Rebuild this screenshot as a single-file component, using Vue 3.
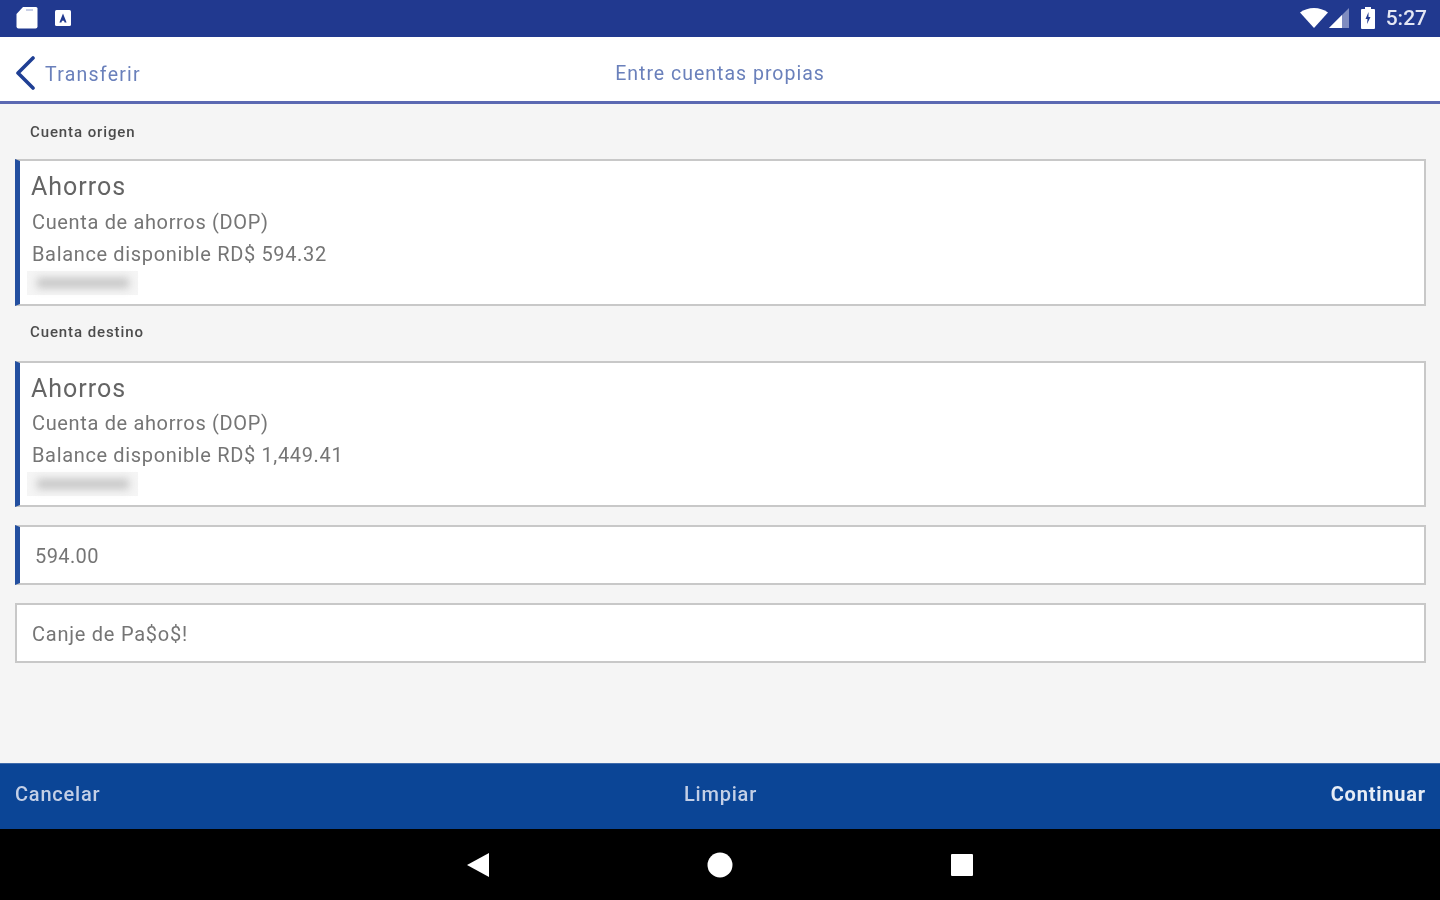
<script setup>
const cards = [
  { label: 'Cuenta origen', balance: 'Balance disponible RD$ 594.32' },
  { label: 'Cuenta destino', balance: 'Balance disponible RD$ 1,449.41' }
]
</script>

<template>
  <div class="screen">
    <div class="status">
      <div class="status-left">
        <svg width="22" height="24" viewBox="0 0 22 24"><path d="M7 1h13a1.500 1.500 0 0 1 1.500 1.500v18a2 2 0 0 1-2 2h-17a2 2 0 0 1-2-2V8z" fill="#fff"/><rect x="10" y="3" width="7" height="2" fill="#c9cfe6"/></svg>
        <svg width="18" height="18" viewBox="0 0 18 18"><rect x="1" y="1" width="16" height="16" rx="1.500" fill="#fff"/><path d="M9 4.500l3.600 9h-2l-.6-1.800H8l-.6 1.800h-2z" fill="#21398f"/></svg>
      </div>
      <div class="status-right">
        <svg class="wifi" width="28" height="20" viewBox="0 0 28 20"><path d="M0 4.500C4 1.500 9 0 14 0s10 1.500 14 4.500L14 20z" fill="#fff"/></svg>
        <svg class="signal" width="20" height="20" viewBox="0 0 20 20"><path d="M20 0v20H0z" fill="#7f8cc0"/><path d="M13 7v13H0z" fill="#fff"/></svg>
        <svg class="battery" width="16" height="22" viewBox="0 0 16 22"><path d="M5 0h6v2h3a1 1 0 0 1 1 1v18a1 1 0 0 1-1 1H2a1 1 0 0 1-1-1V3a1 1 0 0 1 1-1h3z" fill="#fff"/><path d="M8.500 5L5.500 12h2l-.5 5 3.500-7h-2z" fill="#21398f"/></svg>
        <span class="time">5:27</span>
      </div>
    </div>

    <header class="top">
      <div class="back">
        <svg width="20" height="34" viewBox="0 0 20 34"><path d="M18 2L3 17l15 15" fill="none" stroke="#1f3f94" stroke-width="3.600" stroke-linecap="round" stroke-linejoin="round"/></svg>
        <span>Transferir</span>
      </div>
      <div class="title">Entre cuentas propias</div>
    </header>

    <main class="content">
      <section v-for="(card, i) in cards" :key="card.label" class="group" :class="{ second: i === 1 }">
        <div class="label">{{ card.label }}</div>
        <div class="card accent">
          <div class="card-title">Ahorros</div>
          <div class="line">Cuenta de ahorros (DOP)</div>
          <div class="line">{{ card.balance }}</div>
          <div class="masked"><i></i></div>
        </div>
      </section>
      <div class="field amount accent">594.00</div>
      <div class="field note">Canje de Pa$o$!</div>
    </main>

    <div class="actions">
      <span>Cancelar</span>
      <span class="center">Limpiar</span>
      <span class="strong">Continuar</span>
    </div>

    <nav class="nav">
      <svg width="24" height="26" viewBox="0 0 24 26"><path d="M23 1v24L1 13z" fill="#fff"/></svg>
      <svg width="26" height="26" viewBox="0 0 26 26"><circle cx="13" cy="13" r="12.500" fill="#fff"/></svg>
      <svg width="24" height="24" viewBox="0 0 24 24"><rect x="1" y="1" width="22" height="22" rx="1" fill="#fff"/></svg>
    </nav>
  </div>
</template>

<style scoped>
.screen {
  width: 1440px;
  height: 900px;
  display: flex;
  flex-direction: column;
  overflow: hidden;
  background: #f5f5f5;
  font-family: Roboto, "Liberation Sans", sans-serif;
}
.status {
  height: 37px;
  flex: none;
  box-sizing: border-box;
  padding: 0 13px 2px 16px;
  background: #21398f;
  display: flex;
  align-items: center;
  justify-content: space-between;
  color: #fff;
}
.status-left { display: flex; align-items: center; gap: 16px; filter: blur(0.5px); }
.status-right { display: flex; align-items: center; filter: blur(0.5px); }
.wifi { margin-right: 1px; }
.signal { margin-right: 11px; }
.battery { margin-right: 10px; }
.time { font-size: 21px; font-weight: 500; color: #e4e7f4; }
.top {
  height: 64px;
  flex: none;
  position: relative;
  background: #fff;
  border-bottom: 3px solid #5b69b2;
  display: flex;
  align-items: center;
  justify-content: center;
  color: #6a80bb;
  font-size: 19.500px;
  letter-spacing: 0.900px;
}
.back {
  position: absolute;
  left: 15px;
  top: 0;
  bottom: 0;
  display: flex;
  align-items: center;
  gap: 10px;
  filter: blur(0.5px);
}
.back svg { margin-top: 7px; }
.back span { letter-spacing: 1.250px; margin-top: 10px; }
.title { margin-top: 8px; letter-spacing: 1px; filter: blur(0.5px); }
.content {
  flex: 1;
  padding: 0 14px 0 15px;
  display: flex;
  flex-direction: column;
}
.label {
  height: 55px;
  box-sizing: border-box;
  padding: 18px 0 0 15px;
  font-size: 15px;
  line-height: 20px;
  font-weight: 500;
  color: #4c4c4c;
  letter-spacing: 0.900px;
  filter: blur(0.6px);
}
.second .label { height: 55px; padding-top: 16px; }
.card {
  height: 147px;
  box-sizing: border-box;
  background: #fff;
  border: 2px solid #c8c8c8;
  padding: 10px 0 0 12px;
  color: #757575;
  font-size: 20px;
  letter-spacing: 0.650px;
}
.second .card { height: 146px; }
.accent { border-left: 5px solid #234f9f; }
.card-title {
  font-size: 25px;
  line-height: 32px;
  color: #646464;
  margin-left: -1px;
  letter-spacing: 1px;
  filter: blur(0.6px);
}
.line {
  line-height: 32px;
  filter: blur(0.6px);
}
.card-title + .line { margin-top: 3px; }
.second .card-title + .line { margin-top: 2px; }
.masked {
  margin: 1px 0 0 -5px;
  width: 111px;
  height: 24px;
  background: #f5f5f5;
  display: flex;
  align-items: center;
  justify-content: center;
}
.masked i {
  display: block;
  width: 92px;
  height: 10px;
  background: #c4c4c4;
  filter: blur(4px);
}
.field {
  height: 60px;
  box-sizing: border-box;
  background: #fff;
  border: 2px solid #c8c8c8;
  display: flex;
  align-items: center;
  color: #757575;
  font-size: 20px;
  letter-spacing: 0.750px;
  margin-top: 18px;
  padding: 2px 0 0 15px;
}
.field.accent { border-left: 5px solid #234f9f; }
.amount { letter-spacing: 0.400px; filter: blur(0.5px); }
.note { filter: blur(0.5px); }
.actions {
  height: 66px;
  flex: none;
  box-sizing: border-box;
  padding: 0 14px 0 15px;
  background: #0b4596;
  border-top: 1px solid #3f6bab;
  display: grid;
  grid-template-columns: 1fr auto 1fr;
  align-items: center;
  color: #c3cfe6;
  font-size: 20px;
  font-weight: 500;
  letter-spacing: 0.800px;
}
.actions span { margin-top: -5px; filter: blur(0.5px); }
.center { text-align: center; }
.strong { text-align: right; color: #e6ecf6; font-weight: 700; }
.nav {
  height: 71px;
  flex: none;
  background: #000;
  display: flex;
  align-items: center;
  justify-content: center;
  gap: 217px;
  filter: blur(0.5px);
}
</style>
